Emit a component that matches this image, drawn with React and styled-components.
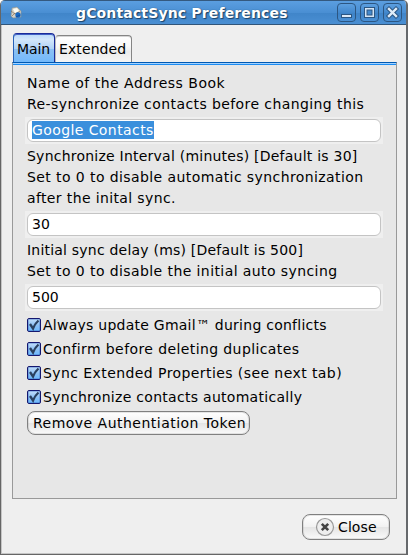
import React from "react";
import styled, { createGlobalStyle } from "styled-components";

const GlobalStyle = createGlobalStyle`
  * { box-sizing: border-box; }
  body { margin: 0; background: #fff; overflow: hidden; }
`;

const Window = styled.main`
  width: 408px;
  height: 555px;
  display: flex;
  flex-direction: column;
  border: 1px solid #666;
  border-top: 0;
  border-right: 2px solid #66696c;
  border-radius: 5px 5px 0 0;
  overflow: hidden;
  background: #efefef;
  box-shadow: inset 1px -1px 0 #c5c5c5;
  font: 14px/21px "DejaVu Sans", sans-serif;
  color: #000;
`;

const TitleBar = styled.header`
  height: 25px;
  flex: none;
  display: flex;
  align-items: center;
  padding: 0 4px 0 8px;
  border-top: 1px solid #34597f;
  border-bottom: 1px solid #315579;
  background: linear-gradient(#5b9ee0 0, #4a8fd3 50%, #4085c9 52%, #4a8fd3 100%);
`;

const Title = styled.h1`
  flex: 1;
  margin: 0;
  padding: 1px 0 0 53px;
  font-size: 14px;
  line-height: 22px;
  letter-spacing: ${(p) => p.$spacing}px;
  white-space: nowrap;
  color: #fff;
  text-shadow: 1px 1px 1px #1c4166, 0 0 1px #1c4166;
`;

const WindowButtons = styled.div`
  display: flex;
  gap: 4px;
`;

const WindowButton = styled.button`
  width: 19px;
  height: 19px;
  padding: 0;
  border: 1px solid #2c5682;
  border-radius: 4px;
  background: linear-gradient(#5c9fe0, #4388cd 50%, #3d82c6 52%, #4a90d5);
  svg { display: block; }
`;

const Tabs = styled.nav`
  height: 37px;
  flex: none;
  display: flex;
  align-items: flex-end;
  padding-left: 12px;
`;

const Tab = styled.button`
  width: ${(p) => p.$width}px;
  height: ${(p) => (p.$active ? 29 : 27)}px;
  padding: ${(p) => (p.$active ? "2px 0 0 3px" : "1px 0 0 3px")};
  border: 1px solid ${(p) => (p.$active ? "#1a2b99" : "#858585")};
  border-left-color: ${(p) => (p.$active ? "#2861b8" : "#bbb")};
  border-bottom: 0;
  border-radius: 4px 4px 0 0;
  background: ${(p) =>
    p.$active
      ? "linear-gradient(#b9d9fa 0, #d3e7fb 20%, #b0d3f7 52%, #8cc0f4 55%, #72b9fb 100%)"
      : "linear-gradient(#fff 0, #f8f8f8 40%, #ececec 60%, #f5f5f5 100%)"};
  box-shadow: ${(p) => (p.$active ? "inset 0 1px #4160c4" : "inset 0 1px #d5d5d5")};
  font: inherit;
  letter-spacing: ${(p) => p.$spacing}px;
  text-align: left;
  white-space: nowrap;
  color: #000;
`;

const Panel = styled.section`
  width: 385px;
  height: 437px;
  flex: none;
  margin-left: 11px;
  padding: 8px 13px 0 12px;
  border: 1px solid #999;
  border-top: 1px solid #0059b2;
  box-shadow: inset 0 1px #a3d2ff, inset 0 2px #1b8cf2;
  background: #e7e7e7;
`;

const Group = styled.div`
  padding-left: 2px;
  margin-top: 2px;
`;

const Line = styled.div`
  height: 21px;
  letter-spacing: ${(p) => p.$spacing}px;
  white-space: nowrap;
`;

const FieldFrame = styled.div`
  width: 358px;
  height: 27px;
  margin-top: 2px;
  padding: 2px;
  background: #efefef;
`;

const Field = styled.div`
  height: 23px;
  display: flex;
  align-items: flex-start;
  padding: 1px 0 0 4px;
  border: 1px solid #c4c4c4;
  border-radius: 6px;
  background: #fff;
`;

const Value = styled.span`
  height: 18px;
  line-height: 18px;
  letter-spacing: ${(p) => p.$spacing}px;
  background: ${(p) => (p.$selected ? "#3a8fdc" : "transparent")};
  color: ${(p) => (p.$selected ? "#fff" : "#000")};
`;

const Options = styled.div`
  padding: 2px 0 2px 2px;
`;

const Option = styled.label`
  height: 24px;
  display: flex;
  align-items: center;
  gap: 2px;
`;

const Box = styled.span`
  width: 14px;
  height: 14px;
  border: 1px solid #14176f;
  border-radius: 2px;
  background: linear-gradient(#c3defa, #8fc1f3 50%, #6cb8fc);
  box-shadow: inset 0 0 0 1px rgba(52, 104, 190, 0.35);
  svg { display: block; }
`;

const PushButton = styled.button`
  width: ${(p) => p.$width}px;
  height: ${(p) => p.$height}px;
  display: flex;
  align-items: center;
  gap: 3px;
  margin-left: ${(p) => p.$offset}px;
  padding: 0 0 0 ${(p) => p.$inset}px;
  border: 1px solid #808080;
  border-radius: 8px;
  background: linear-gradient(#fff 0, #f2f2f2 48%, #e5e5e5 52%, #fafafa 100%);
  box-shadow: inset 0 0 0 1px rgba(128, 128, 128, 0.2);
  font: inherit;
  letter-spacing: ${(p) => p.$spacing}px;
  white-space: nowrap;
  color: #000;
`;

const Footer = styled.footer`
  display: flex;
  padding: 15px 0 0 301px;
`;

const AppIcon = () => (
  <svg width="14" height="14" viewBox="0 0 14 14">
    <path d="M3 2l5-1 4 4v6l-8 1-2-2z" fill="#d4d1c9" stroke="#8d938f" strokeWidth=".6" />
    <path d="M2 5l4 3 5-3M3 10l3-3" fill="none" stroke="#8b7355" strokeWidth=".7" />
    <path d="M4 3l4-1 2 3-4 2z" fill="#fffdf2" />
    <circle cx="9" cy="9" r="2.7" fill="#1769c4" />
    <path d="M7 11l4-2" stroke="#164d9b" />
  </svg>
);

const Minimize = () => (
  <svg width="17" height="17">
    <rect x="3.5" y="10.5" width="10" height="3" fill="#dbe9f7" stroke="#2c5682" />
  </svg>
);

const Maximize = () => (
  <svg width="17" height="17">
    <rect x="3.5" y="3.5" width="10" height="10" fill="#d5e5f5" stroke="#2c5682" />
    <rect x="6" y="6" width="5" height="5" fill="#4489cd" stroke="#2c5682" />
  </svg>
);

const CloseWindow = () => (
  <svg width="17" height="17">
    <path d="M5 5l7 7m0-7l-7 7" stroke="#2c5682" strokeWidth="4.4" strokeLinecap="square" />
    <path d="M5 5l7 7m0-7l-7 7" stroke="#e0edf9" strokeWidth="2.4" strokeLinecap="square" />
  </svg>
);

const Check = () => (
  <svg width="12" height="12">
    <path d="M2 5l3 4.5q2-5 5.5-8" fill="none" stroke="#2a405f" strokeWidth="2.3" />
  </svg>
);

const CloseMark = () => (
  <svg width="20" height="20">
    <circle cx="10" cy="10" r="8.5" fill="#eee" stroke="#999" strokeWidth="1.2" />
    <path d="M6.8 6.8l6.4 6.4m0-6.4l-6.4 6.4" stroke="#444" strokeWidth="2.6" />
  </svg>
);

const groups = [
  {
    lines: [["Name of the Address Book", 0.5], ["Re-synchronize contacts before changing this", 0.41]],
    value: "Google Contacts",
    spacing: 0.41,
    selected: true,
  },
  {
    lines: [
      ["Synchronize Interval (minutes) [Default is 30]", 0.23],
      ["Set to 0 to disable automatic synchronization", 0.41],
      ["after the inital sync.", 0.37],
    ],
    value: "30",
    spacing: 0,
  },
  {
    lines: [["Initial sync delay (ms) [Default is 500]", 0.21], ["Set to 0 to disable the initial auto syncing", 0.41]],
    value: "500",
    spacing: 0,
  },
];

const options = [
  ["Always update Gmail™ during conflicts", 0.25],
  ["Confirm before deleting duplicates", 0.4],
  ["Sync Extended Properties (see next tab)", 0.42],
  ["Synchronize contacts automatically", 0.29],
];

export default function App() {
  return (
    <>
      <GlobalStyle />
      <Window>
        <TitleBar>
          <AppIcon />
          <Title $spacing={0.15}>gContactSync Preferences</Title>
          <WindowButtons>
            <WindowButton aria-label="Minimize"><Minimize /></WindowButton>
            <WindowButton aria-label="Maximize"><Maximize /></WindowButton>
            <WindowButton aria-label="Close window"><CloseWindow /></WindowButton>
          </WindowButtons>
        </TitleBar>
        <Tabs>
          <Tab $active $width={42} $spacing={-0.1}>Main</Tab>
          <Tab $width={77} $spacing={0.1}>Extended</Tab>
        </Tabs>
        <Panel>
          {groups.map((group) => (
            <React.Fragment key={group.value}>
              <Group>
                {group.lines.map(([text, spacing]) => (
                  <Line key={text} $spacing={spacing}>{text}</Line>
                ))}
              </Group>
              <FieldFrame>
                <Field>
                  <Value $selected={group.selected} $spacing={group.spacing}>{group.value}</Value>
                </Field>
              </FieldFrame>
            </React.Fragment>
          ))}
          <Options>
            {options.map(([text, spacing]) => (
              <Option key={text}>
                <Box><Check /></Box>
                <Line $spacing={spacing}>{text}</Line>
              </Option>
            ))}
          </Options>
          <PushButton $width={223} $height={24} $offset={2} $inset={5} $spacing={0.48}>
            Remove Authentiation Token
          </PushButton>
        </Panel>
        <Footer>
          <PushButton $width={88} $height={26} $offset={0} $inset={12} $spacing={0.1}>
            <CloseMark />
            Close
          </PushButton>
        </Footer>
      </Window>
    </>
  );
}
